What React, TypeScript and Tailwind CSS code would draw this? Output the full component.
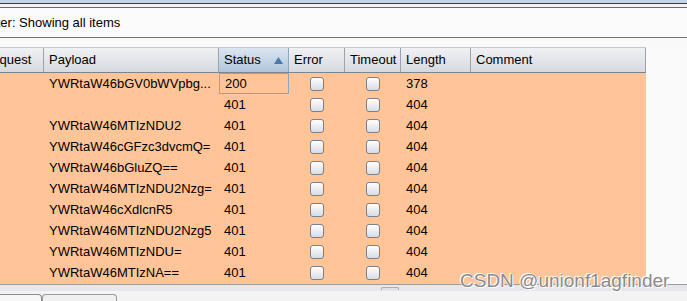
import React from "react";

const rows: { payload: string; status: string; length: string; focus?: boolean }[] = [
  { payload: "YWRtaW46bGV0bWVpbg...", status: "200", length: "378", focus: true },
  { payload: "", status: "401", length: "404" },
  { payload: "YWRtaW46MTIzNDU2", status: "401", length: "404" },
  { payload: "YWRtaW46cGFzc3dvcmQ=", status: "401", length: "404" },
  { payload: "YWRtaW46bGluZQ==", status: "401", length: "404" },
  { payload: "YWRtaW46MTIzNDU2Nzg=", status: "401", length: "404" },
  { payload: "YWRtaW46cXdlcnR5", status: "401", length: "404" },
  { payload: "YWRtaW46MTIzNDU2Nzg5", status: "401", length: "404" },
  { payload: "YWRtaW46MTIzNDU=", status: "401", length: "404" },
  { payload: "YWRtaW46MTIzNA==", status: "401", length: "404" },
];

function Check() {
  return (
    <div className="w-[14px] h-[14px] rounded-[3px] border border-[#7c8089] bg-linear-to-b from-white to-[#d8dce4]" />
  );
}

const hcell = "h-full flex items-center pl-[5px] border-r border-[#9ea3ab] bg-linear-to-b from-[#f0f1f4] to-[#d6d9e0]";

export default function App() {
  return (
    <div
      className="w-[687px] h-[301px] overflow-hidden bg-[#fafafa] flex flex-col text-[13px] text-black relative"
      style={{ fontFamily: '"Liberation Sans", Arial, sans-serif' }}
    >
      <div className="h-[3px] bg-[#c3d4e6] shrink-0" />
      <div className="h-[1px] bg-[#3c3c3c] shrink-0" />
      <div className="h-[3px] bg-[#f2f2f2] shrink-0" />
      <div className="h-[1px] bg-[#6a6a6a] shrink-0" />
      <div className="h-[29px] bg-[#fbfbfb] flex items-center shrink-0">
        <span className="ml-[-17px] leading-none">Filter: Showing all items</span>
      </div>
      <div className="h-[1px] bg-[#707070] shrink-0" />
      <div className="h-[9px] bg-[#f9f9f9] shrink-0" />
      <div className="flex flex-col ml-[-22px] w-[668px] flex-1 min-h-0">
        <div className="h-[26px] flex border-t border-[#c4c7ce] border-b border-b-[#7f838b] shrink-0">
          <div className={`${hcell} w-[66px]`}>Request</div>
          <div className={`${hcell} w-[175px]`}>Payload</div>
          <div className="h-full flex items-center pl-[5px] pr-[5px] justify-between border-r border-[#8ea6c0] bg-linear-to-b from-[#dce6f1] to-[#b0c5dc] w-[70px]">
            <span>Status</span>
            <svg width="9" height="7" viewBox="0 0 9 7" className="mt-[1px]">
              <polygon points="4.5,0 9,7 0,7" fill="#4b78ad" />
            </svg>
          </div>
          <div className={`${hcell} w-[56px]`}>Error</div>
          <div className={`${hcell} w-[56px]`}>Timeout</div>
          <div className={`${hcell} w-[70px]`}>Length</div>
          <div className={`${hcell} w-[175px]`}>Comment</div>
        </div>
        <div className="flex-1 bg-[#ffc598] flex flex-col">
          {rows.map((r, i) => (
            <div key={i} className="h-[21px] flex items-center shrink-0">
              <div className="w-[66px]" />
              <div className="w-[175px] pl-[5px] whitespace-nowrap overflow-hidden">{r.payload}</div>
              <div
                className={`w-[70px] h-full flex items-center pl-[5px] ${
                  r.focus ? "border border-[#8aa6c4] pl-[4px]" : ""
                }`}
              >
                {r.status}
              </div>
              <div className="w-[56px] flex justify-center">
                <Check />
              </div>
              <div className="w-[56px] flex justify-center">
                <Check />
              </div>
              <div className="w-[70px] pl-[5px]">{r.length}</div>
              <div className="w-[175px]" />
            </div>
          ))}
        </div>
      </div>
      <div className="h-[1px] bg-[#9c9c9c] shrink-0" />
      <div className="h-[6px] bg-[#e6e7ea] shrink-0 flex justify-center items-center">
        <div className="ml-[93px] w-[18px] h-[3px] rounded-t-[2px] border border-b-0 border-[#a9adb5] bg-[#dfe1e5]" />
      </div>
      <div className="h-[10px] bg-[#f3f3f3] shrink-0 flex items-end">
        <div className="w-[45px] h-[7px] border border-b-0 border-[#8c8c8c] rounded-t-[4px] bg-[#f7f7f7] ml-[-3px]" />
        <div className="w-[75px] h-[7px] border border-b-0 border-[#9a9a9a] rounded-t-[4px] bg-[#f0f0f0]" />
      </div>
      <div
        className="absolute left-[460px] top-[271px] text-[19px] leading-none text-[#8a8a8a] whitespace-nowrap"
        style={{ textShadow: "0 0 1px #fff, 0 0 1px #fff, 1px 1px 0 #fff, -1px -1px 0 #fff" }}
      >
        CSDN @unionf1agfinder
      </div>
    </div>
  );
}
